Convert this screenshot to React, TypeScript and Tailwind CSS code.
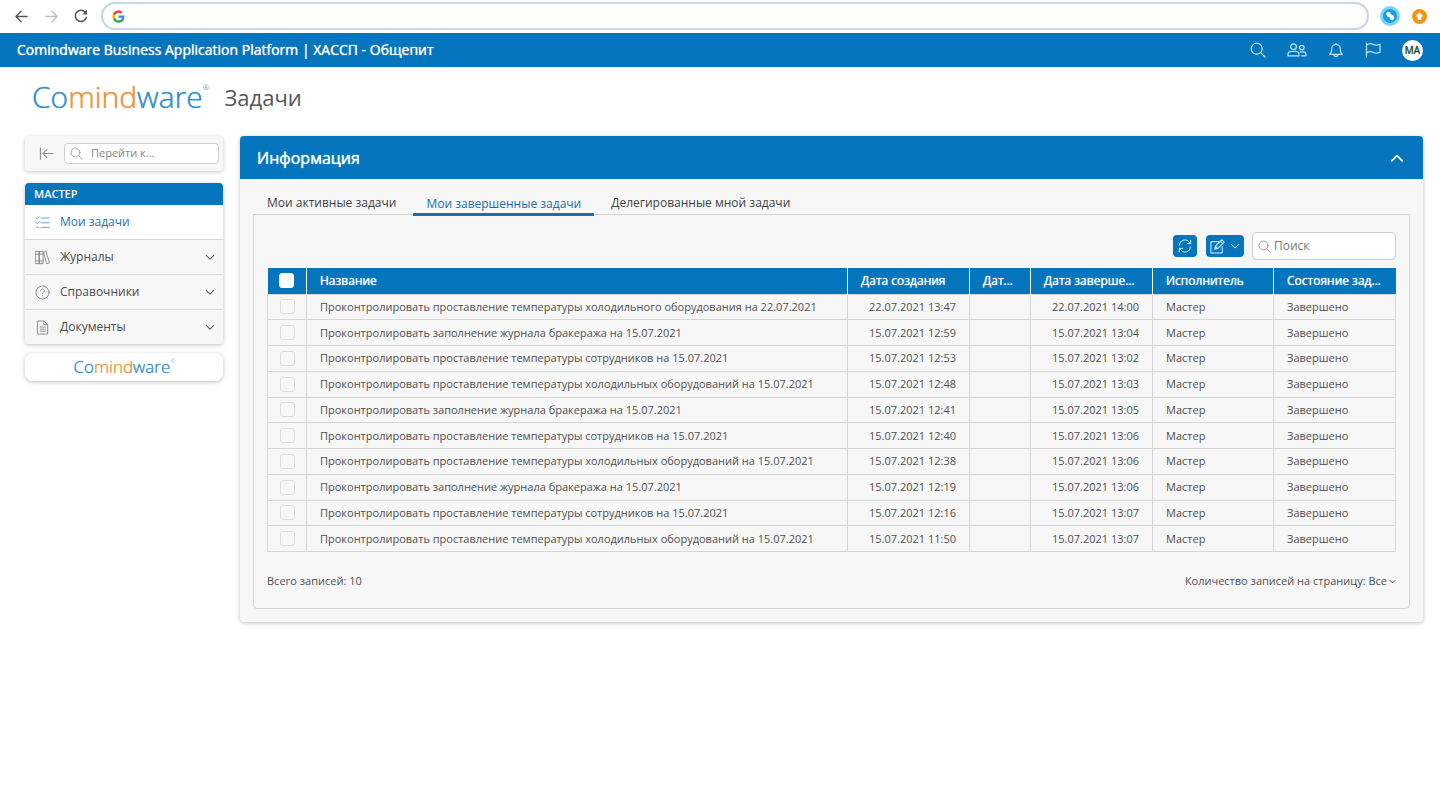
import { useState } from "react";
import type { ReactNode } from "react";

const HACCP_ROWS: [string, string, string][] = [
  ["Проконтролировать проставление температуры холодильного оборудования на 22.07.2021", "22.07.2021 13:47", "22.07.2021 14:00"],
  ["Проконтролировать заполнение журнала бракеража на 15.07.2021", "15.07.2021 12:59", "15.07.2021 13:04"],
  ["Проконтролировать проставление температуры сотрудников на 15.07.2021", "15.07.2021 12:53", "15.07.2021 13:02"],
  ["Проконтролировать проставление температуры холодильных оборудований на 15.07.2021", "15.07.2021 12:48", "15.07.2021 13:03"],
  ["Проконтролировать заполнение журнала бракеража на 15.07.2021", "15.07.2021 12:41", "15.07.2021 13:05"],
  ["Проконтролировать проставление температуры сотрудников на 15.07.2021", "15.07.2021 12:40", "15.07.2021 13:06"],
  ["Проконтролировать проставление температуры холодильных оборудований на 15.07.2021", "15.07.2021 12:38", "15.07.2021 13:06"],
  ["Проконтролировать заполнение журнала бракеража на 15.07.2021", "15.07.2021 12:19", "15.07.2021 13:06"],
  ["Проконтролировать проставление температуры сотрудников на 15.07.2021", "15.07.2021 12:16", "15.07.2021 13:07"],
  ["Проконтролировать проставление температуры холодильных оборудований на 15.07.2021", "15.07.2021 11:50", "15.07.2021 13:07"],
];

const TABS = ["Мои активные задачи", "Мои завершенные задачи", "Делегированные мной задачи"];

function Icon({ className, box = 16, stroke = 1, children }: { className: string; box?: number; stroke?: number; children: ReactNode }) {
  return (
    <svg className={className} viewBox={`0 0 ${box} ${box}`} fill="none" stroke="currentColor" strokeWidth={stroke} strokeLinecap="round" strokeLinejoin="round" aria-hidden="true">
      {children}
    </svg>
  );
}

function SearchIcon({ className }: { className: string }) {
  return (
    <Icon className={className} stroke={1.2}>
      <circle cx="6.7" cy="6.7" r="5.5" />
      <path d="M10.7 10.7 15 15" />
    </Icon>
  );
}

function Chevron({ className, up = false, stroke = 1.4 }: { className: string; up?: boolean; stroke?: number }) {
  return (
    <Icon className={className} box={12} stroke={stroke}>
      <path d={up ? "M1.500 8.500 6 4l4.500 4.500" : "M1.500 4 6 8.500 10.500 4"} />
    </Icon>
  );
}

function Brand({ large = false }: { large?: boolean }) {
  return (
    <span className={large ? "flex items-start text-[30px] leading-9 font-light text-[#3d8fc9]" : "flex items-start text-[17px] leading-6 font-light text-[#3d8fc9]"}>
      <span className="[text-shadow:0_0_1px_currentColor]">
        Co<span className="text-[#ee9340] [text-shadow:0_0_1px_currentColor]">mind</span>ware
      </span>
      <span className={large ? "text-[8px] leading-4" : "text-[5px] leading-3"}>®</span>
    </span>
  );
}

function BrowserBar() {
  return (
    <div className="flex h-[33px] items-center bg-white pr-[13px] pb-px pl-3">
      <div className="flex items-center gap-3 text-[#55585c]">
        <button aria-label="Назад" className="flex size-[18px] items-center justify-center">
          <Icon className="size-[15px]" stroke={1.5}><path d="M14 8H2.500M7.500 2.500 2 8l5.500 5.500" /></Icon>
        </button>
        <button aria-label="Вперёд" className="flex size-[18px] items-center justify-center text-[#bcbec0]">
          <Icon className="size-[15px]" stroke={1.5}><path d="M2 8h11.500M8.500 2.500 14 8l-5.500 5.500" /></Icon>
        </button>
        <button aria-label="Обновить" className="flex size-[18px] items-center justify-center">
          <Icon className="size-4" stroke={1.6}>
            <path d="M13.300 9.500A5.600 5.600 0 1 1 12.300 4.300" />
            <path d="M14 1.800V6.500H9.300z" fill="currentColor" stroke="none" />
          </Icon>
        </button>
      </div>
      <div className="ml-[11px] flex h-7 flex-1 items-center gap-2 rounded-full border-2 border-[#c3d5f3] bg-white pr-4 pl-[9px]">
        <svg className="size-[13px]" viewBox="0 0 24 24" aria-hidden="true">
          <path fill="#4285f4" d="M23 12.300c0-.8-.1-1.500-.2-2.300H12v4.400h6.200a5.300 5.300 0 0 1-2.300 3.500v2.900h3.700c2.200-2 3.400-5 3.400-8.500z" />
          <path fill="#34a853" d="M12 23.500c3.100 0 5.700-1 7.600-2.800l-3.700-2.900a7 7 0 0 1-10.300-3.600H1.800v3a11.500 11.500 0 0 0 10.200 6.300z" />
          <path fill="#fbbc05" d="M5.600 14.200a7 7 0 0 1 0-4.400v-3H1.800a11.500 11.500 0 0 0 0 10.400z" />
          <path fill="#ea4335" d="M12 5.100c1.700 0 3.200.6 4.400 1.700l3.300-3.300A11.500 11.500 0 0 0 1.800 6.800l3.800 3A6.900 6.900 0 0 1 12 5.100z" />
        </svg>
        <input aria-label="Адрес" className="min-w-0 flex-1 text-sm outline-none" />
      </div>
      <div className="ml-[11px] flex items-center gap-3">
        <svg className="size-5" viewBox="0 0 20 20" aria-hidden="true">
          <circle cx="10" cy="10" r="10" fill="#7fd3f6" />
          <circle cx="10" cy="10" r="7" fill="#169fe3" />
          <path d="M6 7.200 8 5.700l2.300.5.500 2 2.700 1.300.9 2.700-2 2-2.300-.8-.5-2.200L7 10.200z" fill="#fff" />
        </svg>
        <svg className="size-[15px]" viewBox="0 0 15 15" aria-hidden="true">
          <circle cx="7.500" cy="7.500" r="7.500" fill="#ef9511" />
          <path d="M7.500 3.300 11.500 7.500H9.300V11H5.700V7.500H3.500z" fill="#fff" />
        </svg>
      </div>
    </div>
  );
}

function AppHeader() {
  return (
    <header className="flex h-[34px] items-center justify-between bg-[#0575be] px-[17px] text-white">
      <span className="text-sm [text-shadow:0_0_1px_currentColor]">Comindware Business Application Platform | ХАССП - Общепит</span>
      <div className="flex items-center gap-[21px] text-[#c5e6fa]">
        <button aria-label="Поиск"><SearchIcon className="size-4" /></button>
        <button aria-label="Пользователи">
          <svg className="h-4 w-5" viewBox="0 0 20 16" fill="none" stroke="currentColor" strokeWidth="1.200" strokeLinejoin="round" aria-hidden="true">
            <circle cx="6.500" cy="4.800" r="2.900" />
            <path d="M1 13.800v-1.500c0-1.800 1.200-2.800 3-2.800h5c1.800 0 3 1 3 2.800v1.500z" />
            <circle cx="14.800" cy="5.600" r="2.300" />
            <path d="M13 9.800h3c1.800 0 3 1 3 2.500v1.500h-4.800" />
          </svg>
        </button>
        <button aria-label="Уведомления">
          <Icon className="size-4" stroke={1.2}><path d="M1.800 12.300c1.500-1 1.900-2.300 1.900-5.500a4.300 4.300 0 0 1 8.600 0c0 3.200.4 4.500 1.900 5.500zM6 12.500a2 2 0 0 0 4 0M8 2.300V1.300" /></Icon>
        </button>
        <button aria-label="Флаг">
          <Icon className="size-4" stroke={1.2}><path d="M1.500 1v14M1.500 3c3-2.300 5.500-1.300 7-.5s3.500 1 6.500-.3v8c-3 1.300-5 1-6.500.3s-4-1.500-7 .3" /></Icon>
        </button>
        <button aria-label="Профиль" className="flex size-[21px] items-center justify-center rounded-full bg-white text-[10px] text-[#1c4a33] [text-shadow:0_0_1px_currentColor]">MA</button>
      </div>
    </header>
  );
}

function NavItem({ label, icon, active = false }: { label: string; icon: ReactNode; active?: boolean }) {
  return (
    <li className="border-t border-[#d8d8d8] first:border-t-0">
      <a href="#" className={active ? "flex h-[34px] items-center bg-white pr-2 pl-[10px] text-[#1b6fae]" : "flex h-[34px] items-center bg-[#f7f7f7] pr-2 pl-[10px] text-[#4c4c4c]"}>
        <span className={active ? "mr-[10px] text-[#5fa4d4]" : "mr-[10px] text-[#8c8c8c]"}>{icon}</span>
        <span className="flex-1 text-xs">{label}</span>
        {!active && <Chevron className="size-[10px] text-[#666]" />}
      </a>
    </li>
  );
}

function Sidebar() {
  return (
    <aside className="w-[198px] shrink-0">
      <div className="flex h-[35px] items-center rounded bg-[#f7f7f7] pr-1 pl-[14px] shadow-[0_1px_4px_rgba(0,0,0,0.22)]">
        <button aria-label="Свернуть меню" className="mr-[10px] text-[#8c8c8c]">
          <Icon className="size-[15px]" stroke={1.1}><path d="M1.500 2v12M15 8H4.500M8.500 3.700 4.200 8l4.300 4.300" /></Icon>
        </button>
        <label className="flex h-[21px] min-w-0 flex-1 items-center gap-2 rounded border border-[#cfcfcf] bg-white px-[5px] text-[#a0a0a0]">
          <SearchIcon className="size-[13px] shrink-0" />
          <input aria-label="Перейти к" placeholder="Перейти к..." className="w-full min-w-0 text-[11px] text-[#555] outline-none placeholder:text-[#858585]" />
        </label>
      </div>
      <nav className="mt-3 overflow-hidden rounded shadow-[0_1px_4px_rgba(0,0,0,0.25)]">
        <h2 className="flex h-[22px] items-center bg-[#0575be] pl-[9px] text-[11px] font-semibold text-white">МАСТЕР</h2>
        <ul>
          <NavItem
            active
            label="Мои задачи"
            icon={<Icon className="size-[15px]"><path d="M6.500 3.200H15M6.500 8.200H15M6.500 13.200H15M1 3l1.400 1.300L4.500 1.800M1 8l1.400 1.300L4.500 6.800M1.500 13.200h2" /></Icon>}
          />
          <NavItem
            label="Журналы"
            icon={<Icon className="size-[15px]"><path d="M.8 1.500h3.900v13H.8zM4.700 1.500h3.900v13H4.700zM.8 4.500h7.800M.8 11.500h7.800M9.500 2.300l2.300-.8 3.500 12.200-2.500.8z" /></Icon>}
          />
          <NavItem
            label="Справочники"
            icon={<Icon className="size-[15px]"><circle cx="8" cy="8" r="7" /><path d="M6 6.300C6 5 6.900 4.300 8 4.300s2 .8 2 1.900C10 7.500 8 7.700 8 9.300M8 11.500v.2" /></Icon>}
          />
          <NavItem
            label="Документы"
            icon={<Icon className="size-[15px]"><path d="M3 1h6.500L13.500 5v10H3zM9.500 1v4h4M5.500 7.500H11M5.500 9.800H11M5.500 12H11" /></Icon>}
          />
        </ul>
      </nav>
      <div className="mt-[9px] flex h-7 items-center justify-center rounded-lg bg-white shadow-[0_1px_4px_rgba(0,0,0,0.25)]">
        <Brand />
      </div>
    </aside>
  );
}

const BOX = "block size-[15px] appearance-none rounded-[3px] border mx-auto";
const HEAD = "border-l border-white px-[13px] text-left text-xs font-normal whitespace-nowrap [text-shadow:0_0_1px_currentColor]";
const CELL = "truncate border border-[#d6d6d6] px-[13px] py-0";

function TaskTable() {
  return (
    <table className="h-[284px] w-full table-fixed border-collapse text-[#505050]">
      <colgroup>
        <col className="w-[39px]" />
        <col />
        <col className="w-[122px]" />
        <col className="w-[61px]" />
        <col className="w-[122px]" />
        <col className="w-[121px]" />
        <col className="w-[122px]" />
      </colgroup>
      <thead>
        <tr className="h-[26px] bg-[#0575be] text-white">
          <th><input type="checkbox" aria-label="Выбрать все" className={`${BOX} border-white bg-white`} /></th>
          <th className={HEAD}>Название</th>
          <th className={HEAD}>Дата создания</th>
          <th className={HEAD}>Дат...</th>
          <th className={HEAD}>Дата заверше...</th>
          <th className={HEAD}>Исполнитель</th>
          <th className={HEAD}>Состояние зад...</th>
        </tr>
      </thead>
      <tbody className="text-[11px] leading-4">
        {HACCP_ROWS.map(([name, created, finished], i) => (
          <tr key={i}>
            <td className="border border-[#d6d6d6] p-0"><input type="checkbox" aria-label={name} className={`${BOX} border-[#dcdcdc]`} /></td>
            <td className={CELL}>{name}</td>
            <td className={`${CELL} text-right`}>{created}</td>
            <td className={CELL} />
            <td className={`${CELL} text-right`}>{finished}</td>
            <td className={CELL}>Мастер</td>
            <td className={CELL}>Завершено</td>
          </tr>
        ))}
      </tbody>
    </table>
  );
}

function InfoPanel() {
  const [tab, setTab] = useState(1);
  return (
    <section className="min-w-0 flex-1 rounded bg-[#f7f7f7] shadow-[0_1px_4px_rgba(0,0,0,0.25)]">
      <div className="flex h-[43px] items-center justify-between rounded-t bg-[#0575be] pr-[19px] pl-[17px] text-white">
        <h2 className="text-base [text-shadow:0_0_1px_currentColor]">Информация</h2>
        <button aria-label="Свернуть"><Chevron up className="size-[14px]" stroke={1.5} /></button>
      </div>
      <div className="px-[13px] pt-3 pb-[13px]">
        <div role="tablist" className="flex gap-[3px] text-xs text-[#3f3f3f]">
          {TABS.map((label, i) => (
            <button
              key={label}
              role="tab"
              aria-selected={i === tab}
              onClick={() => setTab(i)}
              className={i === tab ? "relative z-10 -mb-[2px] h-[25px] border-b-3 border-[#1b6fae] px-[13px] pt-[3px] text-[#1b6fae]" : "h-[23px] px-[14px] pt-px"}
            >
              {label}
            </button>
          ))}
        </div>
        <div className="rounded-b border border-[#d6d6d6] p-[17px] px-[13px]">
          <div className="mb-2 flex items-center justify-end">
            <button aria-label="Обновить" className="flex h-[22px] w-6 items-center justify-center rounded bg-[#0575be] text-[#d9effc]">
              <Icon className="size-[14px]" stroke={1.1}>
                <path d="M1.500 7A6.300 6.300 0 0 1 13.500 4.700M14.500 1.500v3.800h-3.800M14.500 9A6.300 6.300 0 0 1 2.500 11.300M1.500 14.500v-3.800h3.800" />
              </Icon>
            </button>
            <button aria-label="Изменить" className="ml-[9px] flex h-[22px] w-[38px] items-center justify-center gap-[5px] rounded bg-[#0575be] text-[#d9effc]">
              <Icon className="size-[15px]" stroke={1.1}>
                <path d="M10 3H1v12h12V8M5 11l.8-3.300L12.700.9l2.400 2.400-6.900 6.900zM11 2.600 13.400 5M5.800 7.700l2.400 2.500" />
              </Icon>
              <Chevron className="size-[10px]" stroke={1.2} />
            </button>
            <label className="ml-2 flex h-7 w-36 items-center gap-[3px] rounded border border-[#d0d0d0] bg-white px-[5px] text-[#999]">
              <SearchIcon className="size-[13px] shrink-0" />
              <input aria-label="Поиск" placeholder="Поиск" className="w-full min-w-0 text-xs text-[#555] outline-none placeholder:text-[#777]" />
            </label>
          </div>
          <TaskTable />
          <div className="mt-[19px] flex items-center justify-between text-[11px] leading-5 text-[#505050]">
            <span>Всего записей: 10</span>
            <button className="flex items-center gap-[2px]">
              Количество записей на страницу: Все
              <Chevron className="size-[7px]" stroke={1.6} />
            </button>
          </div>
        </div>
      </div>
    </section>
  );
}

export default function App() {
  return (
    <div className="min-h-screen bg-white font-['Open_Sans',sans-serif]">
      <BrowserBar />
      <AppHeader />
      <div className="flex h-[69px] items-center gap-[15px] pb-[9px] pl-8">
        <Brand large />
        <h1 className="text-[22px] leading-8 text-[#555]">Задачи</h1>
      </div>
      <main className="flex items-start gap-[17px] pr-[17px] pb-8 pl-[25px]">
        <Sidebar />
        <InfoPanel />
      </main>
    </div>
  );
}
